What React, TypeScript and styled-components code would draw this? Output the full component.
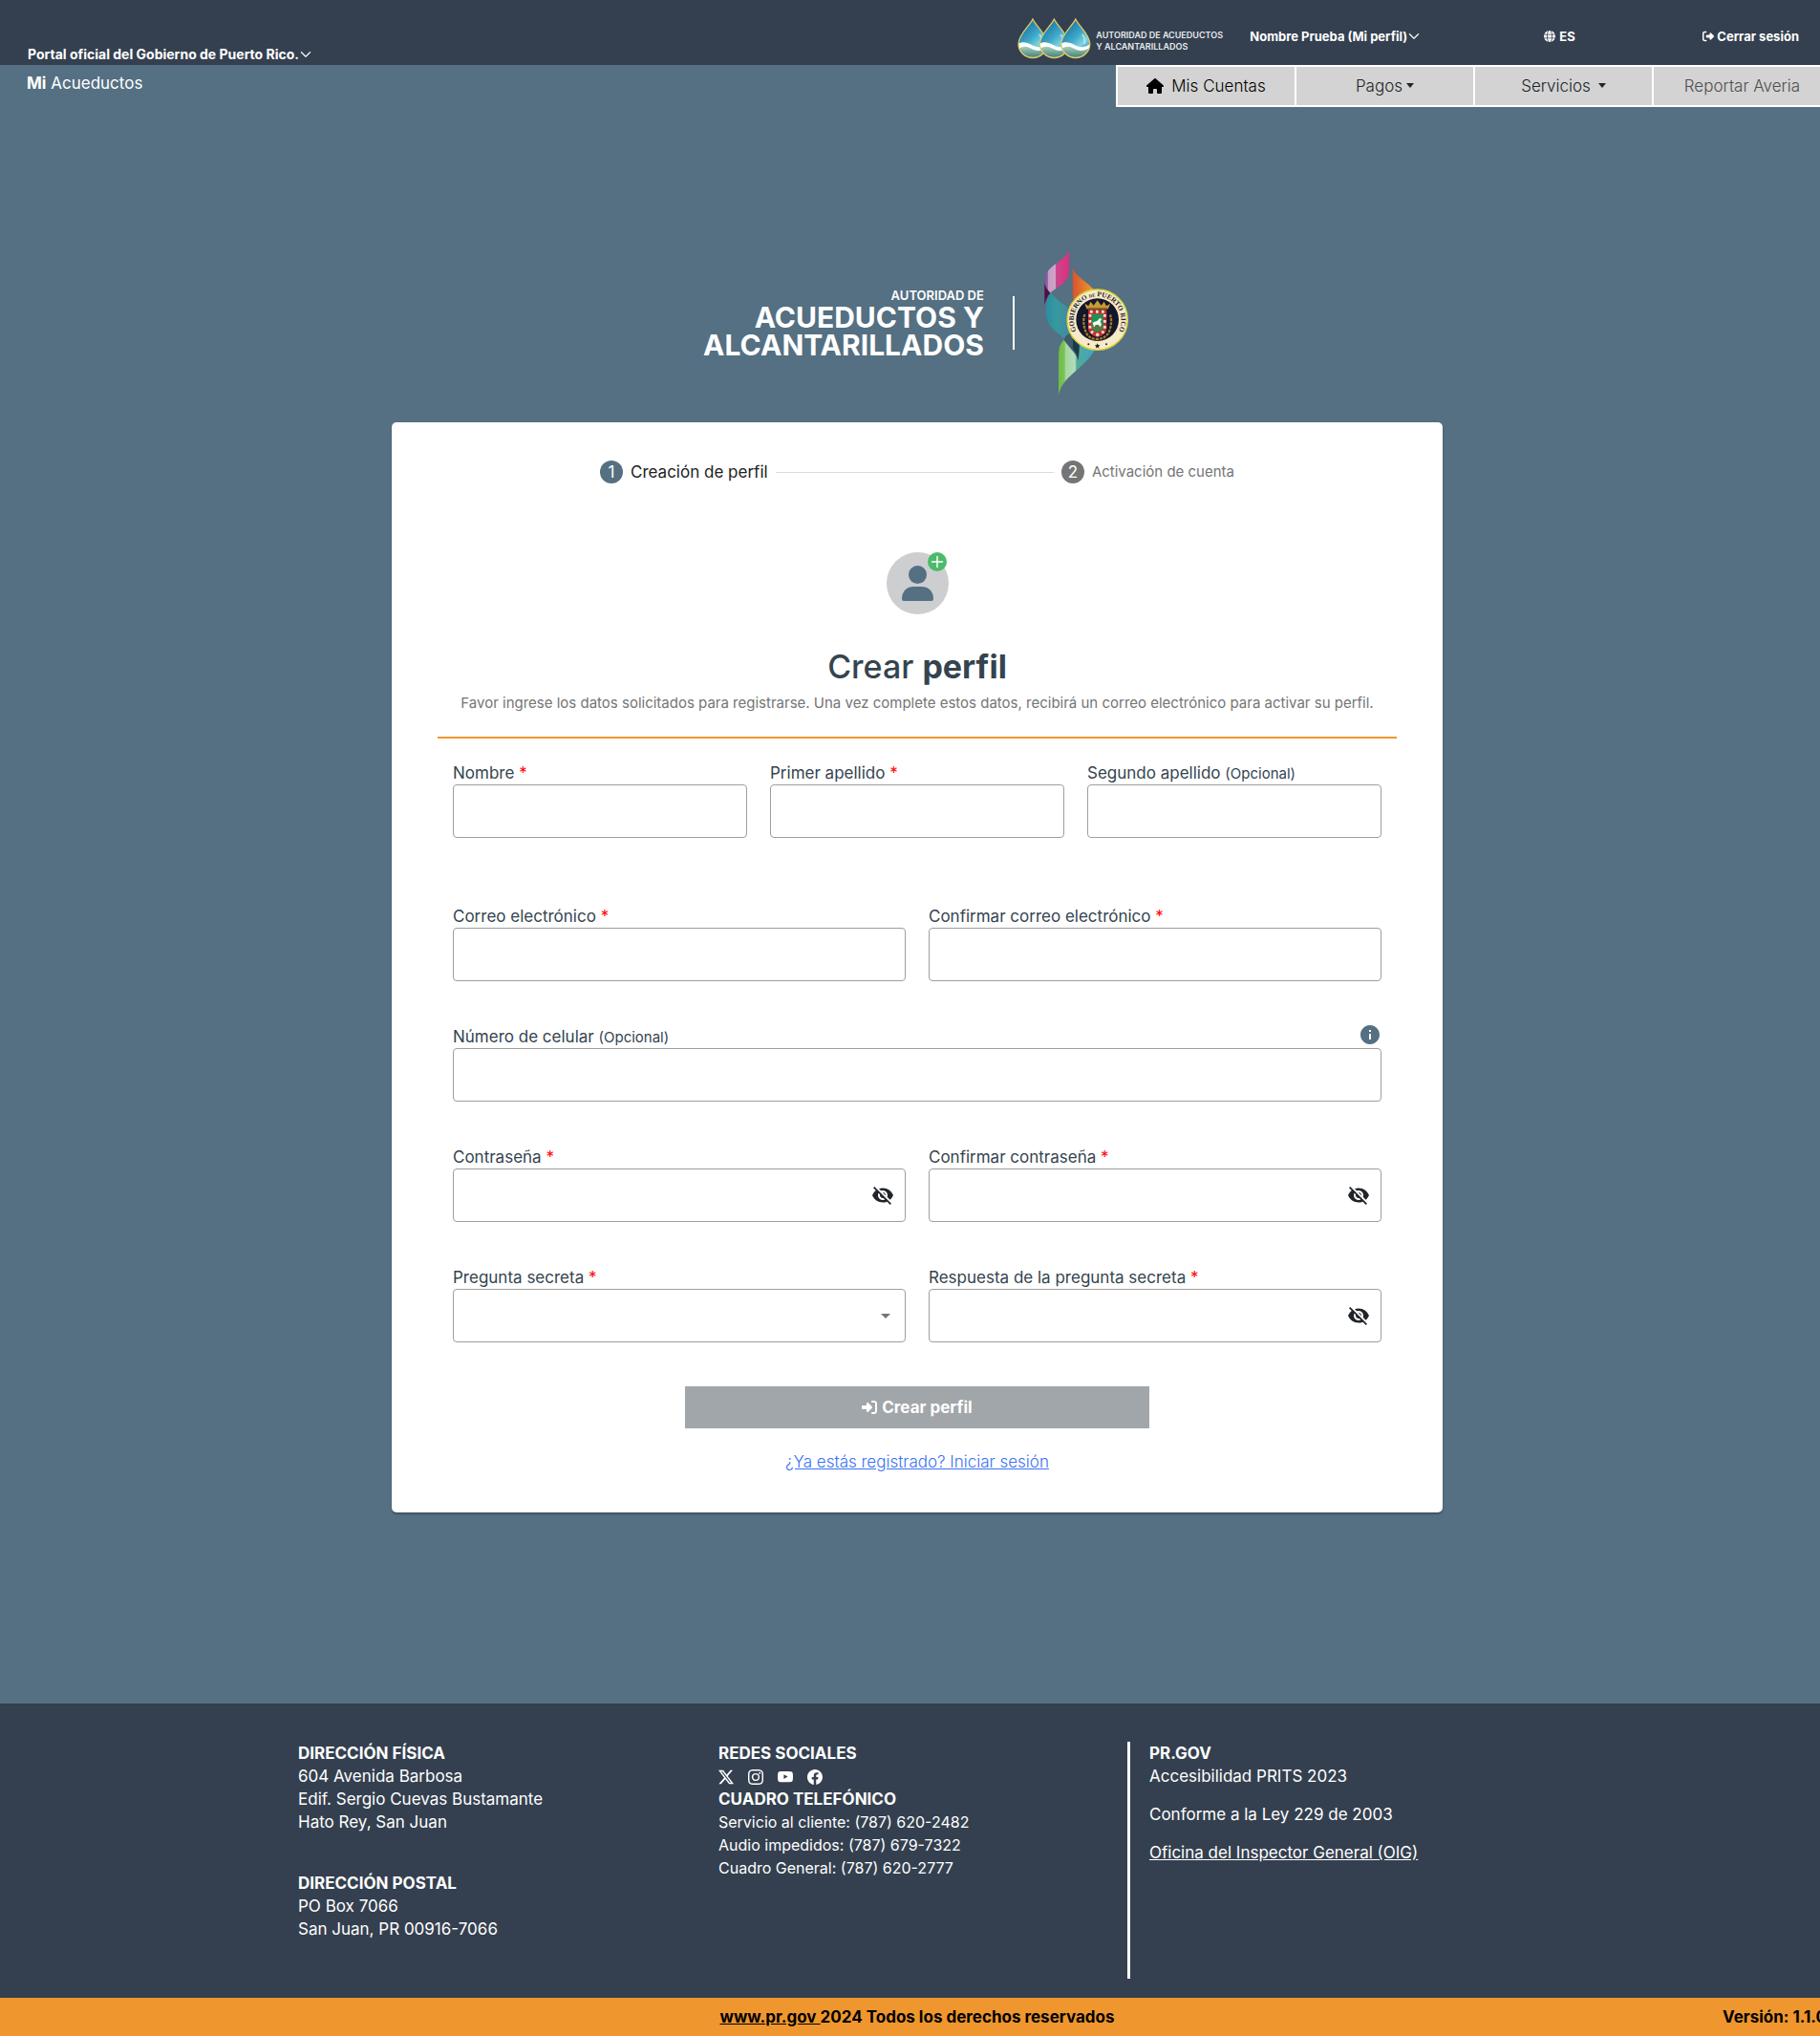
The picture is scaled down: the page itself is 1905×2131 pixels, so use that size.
import React, { useId } from "react";
import styled, { createGlobalStyle } from "styled-components";
import { BsChevronDown, BsFacebook, BsInstagram, BsTwitterX, BsYoutube } from "react-icons/bs";
import { FaGlobe, FaHouse, FaRightFromBracket, FaRightToBracket } from "react-icons/fa6";
import { MdVisibilityOff, MdInfo } from "react-icons/md";

const color = {
  navy: "#34404f",
  slate: "#547082",
  orange: "#ef972e",
  ink: "#34444f",
  muted: "#757575",
  line: "#9e9e9e",
  tab: "#d3d3d3",
};

const GlobalStyle = createGlobalStyle`
  *, *::before, *::after { box-sizing: border-box; }
  body {
    margin: 0;
    overflow-x: hidden;
    background: ${color.slate};
    font-family: Inter, "Liberation Sans", sans-serif;
    font-size: 17px;
    line-height: 24px;
  }
  h1, h2, p, ul { margin: 0; padding: 0; }
  button, input, select { font: inherit; }
`;

const Page = styled.div`
  display: flex;
  flex-direction: column;
  min-height: 100vh;
  margin-right: -15px;
`;

const Header = styled.header`
  display: flex;
  justify-content: space-between;
  height: 68px;
  padding: 0 37px 0 29px;
  background: ${color.navy};
  color: #fff;
`;

const TopButton = styled.button<{ $gap?: number }>`
  display: flex;
  align-items: center;
  gap: ${(p) => p.$gap ?? 1}px;
  padding: 0;
  border: 0;
  background: none;
  color: inherit;
  font-size: 13px;
  font-weight: 700;
  line-height: 20px;
  white-space: nowrap;
`;

const HeaderStart = styled.div`
  display: flex;
  align-items: flex-end;
  ${TopButton} { padding-bottom: 1px; font-size: 14px; }
`;

const HeaderEnd = styled.div`
  display: grid;
  grid-template-columns: 243px 308px 166px auto;
  align-items: center;
  padding-top: 8px;
`;

const Brand = styled.a`
  display: flex;
  align-items: center;
  gap: 4px;
  padding-top: 4px;
  color: #e8ebee;
  font-size: 9px;
  font-weight: 600;
  line-height: 12px;
  text-decoration: none;
  span { padding-top: 6px; }
`;

const Bar = styled.div`
  display: flex;
  justify-content: space-between;
  align-items: flex-start;
  height: 44px;
  color: #fff;
`;

const SiteName = styled.p`
  padding: 7px 0 0 28px;
`;

const Tabs = styled.nav`
  display: grid;
  grid-template-columns: repeat(4, 185px);
  gap: 2px;
  padding: 2px;
  margin-right: 2px;
  background: #fff;
`;

const Tab = styled.a<{ $tone: string; $gap?: number }>`
  display: flex;
  justify-content: center;
  align-items: center;
  gap: ${(p) => p.$gap ?? 8}px;
  height: 40px;
  padding-bottom: 1px;
  background: ${color.tab};
  color: ${(p) => p.$tone};
  font-weight: 300;
  text-decoration: none;
`;

const Caret = styled.span`
  border: 4px solid transparent;
  border-top: 5px solid currentColor;
  border-bottom: 0;
`;

const Main = styled.main`
  display: flex;
  flex-direction: column;
  align-items: center;
  flex: 1;
  padding: 145px 24px 200px;
`;

const Banner = styled.div`
  display: flex;
  align-items: center;
  gap: 30px;
  margin-bottom: 24px;
  color: #fff;
`;

const BannerName = styled.div`
  text-align: right;
  font-size: 30px;
  font-weight: 700;
  line-height: 29px;
`;

const BannerOver = styled.div`
  font-size: 13px;
  font-weight: 600;
  line-height: 18px;
`;

const BannerRule = styled.span`
  width: 2px;
  height: 56px;
  background: #fff;
`;

const Card = styled.section`
  width: 100%;
  max-width: 1100px;
  padding: 40px 48px 41px;
  border-radius: 5px;
  background: #fff;
  box-shadow: 0 2px 2px rgba(0, 0, 0, 0.25);
`;

const Steps = styled.ol`
  display: flex;
  align-items: center;
  gap: 8px;
  max-width: 664px;
  margin: 0 auto;
  padding: 0;
  list-style: none;
`;

const Step = styled.li<{ $active?: boolean }>`
  display: flex;
  align-items: center;
  gap: 8px;
  color: ${(p) => (p.$active ? "#212121" : color.muted)};
  font-size: ${(p) => (p.$active ? 17 : 15)}px;
  white-space: nowrap;
`;

const StepNumber = styled.span<{ $active?: boolean }>`
  width: 24px;
  height: 24px;
  border-radius: 50%;
  background: ${(p) => (p.$active ? color.slate : color.muted)};
  color: #fff;
  font-size: 17px;
  text-align: center;
`;

const StepLine = styled.li`
  flex: 1;
  height: 1px;
  background: #dcdcdc;
`;

const Intro = styled.div`
  display: flex;
  flex-direction: column;
  align-items: center;
  padding: 72px 0 23px;
  border-bottom: 2px solid ${color.orange};
  color: ${color.muted};
  font-size: 15px;
`;

const Title = styled.h1`
  margin: 34px 0 6px;
  color: ${color.ink};
  font-size: 34px;
  font-weight: 500;
  line-height: 41px;
  b { font-weight: 700; }
`;

const Form = styled.form`
  display: flex;
  flex-direction: column;
  gap: 46px;
  padding: 24px 16px 0;
`;

const Row = styled.div<{ $cols: number; $extra?: boolean }>`
  display: grid;
  grid-template-columns: repeat(${(p) => p.$cols}, minmax(0, 1fr));
  gap: 24px;
  margin-bottom: ${(p) => (p.$extra ? 24 : 0)}px;
`;

const FieldHead = styled.div`
  display: flex;
  justify-content: space-between;
  align-items: center;
  height: 24px;
`;

const Label = styled.label`
  color: ${color.ink};
  small { font-size: 15px; }
  span { color: #f00; }
`;

const IconButton = styled.button<{ $color: string }>`
  display: flex;
  align-items: center;
  padding: 0;
  border: 0;
  background: none;
  color: ${(p) => p.$color};
`;

const InfoSlot = styled.div`
  padding-bottom: 4px;
`;

const Control = styled.div`
  display: flex;
  align-items: center;
  height: 56px;
  padding-right: 11px;
  border: 1px solid ${color.line};
  border-radius: 4px;
  color: ${color.muted};
`;

const fieldReset = `
  flex: 1;
  min-width: 0;
  height: 100%;
  padding: 0 16px;
  border: 0;
  outline: 0;
  background: transparent;
  appearance: none;
`;

const Input = styled.input`${fieldReset}`;
const Select = styled.select`${fieldReset}`;

const SelectCaret = styled.span`
  margin-right: 4px;
  border: 5px solid transparent;
  border-top-color: currentColor;
  border-bottom: 0;
`;

const Actions = styled.div`
  display: flex;
  flex-direction: column;
  align-items: center;
  gap: 23px;
`;

const Submit = styled.button`
  display: flex;
  justify-content: center;
  align-items: center;
  gap: 5px;
  width: 50%;
  height: 44px;
  border: 0;
  background: #a1a6aa;
  color: #fff;
  font-weight: 700;
`;

const LoginLink = styled.a`
  color: #3b71f3;
  font-weight: 300;
`;

const Footer = styled.footer`
  background: ${color.navy};
  color: #fff;
`;

const FooterGrid = styled.div`
  display: grid;
  grid-template-columns: 440px 428px 1fr;
  width: 1296px;
  max-width: 100%;
  margin: 0 auto;
  padding: 40px 0 20px;
  min-height: 308px;
`;

const FooterCol = styled.div<{ $ruled?: boolean }>`
  ${(p) => p.$ruled && "padding-left: 20px; border-left: 3px solid #fff;"}
  p + p { margin-top: ${(p) => (p.$ruled ? 16 : 0)}px; }
  a { color: inherit; }
`;

const FooterTitle = styled.h2<{ $spaced?: boolean }>`
  margin-top: ${(p) => (p.$spaced ? 40 : 0)}px;
  font-size: 17px;
  font-weight: 700;
`;

const Phone = styled.p`
  font-size: 16px;
`;

const Social = styled.div`
  display: flex;
  align-items: center;
  gap: 15px;
  height: 24px;
  padding-top: 2px;
  a { display: flex; }
`;

const Legal = styled.div`
  display: grid;
  grid-template-columns: 1fr auto 1fr;
  align-items: center;
  height: 40px;
  padding-bottom: 1px;
  background: ${color.orange};
  color: #000;
  font-weight: 700;
  a { color: inherit; }
`;

const Version = styled.span`
  padding-right: 8px;
  text-align: right;
`;

const Drops = () => (
  <svg width="78" height="43" viewBox="0 0 78 43" aria-hidden="true">
    <defs>
      <linearGradient id="water" x1="0" y1="0" x2="0.7" y2="1">
        <stop offset="0" stopColor="#1c6f9f" />
        <stop offset="0.3" stopColor="#2484ae" />
        <stop offset="0.55" stopColor="#3fa9c9" />
        <stop offset="0.75" stopColor="#7fd3e2" />
        <stop offset="1" stopColor="#2c86a8" />
      </linearGradient>
      <linearGradient id="moss" x1="0" y1="0" x2="0" y2="1">
        <stop offset="0" stopColor="#a9cfc0" />
        <stop offset="1" stopColor="#2f7566" />
      </linearGradient>
      <clipPath id="drop">
        <path d="M16 2C19 8 31 17 31 27A15 14 0 0 1 1 27C1 17 13 8 16 2Z" />
      </clipPath>
    </defs>
    {[0, 22.4, 44.8].map((x) => (
      <g key={x} transform={`translate(${x} 0)`}>
        <g clipPath="url(#drop)">
          <rect width="32" height="43" fill="url(#water)" />
          <path d="M0 27C8 23 12 27 17 29S27 31 32 26V43H0Z" fill="#fff" />
          <path d="M0 33C8 27 12 31 17 33S27 34 32 30V43H0Z" fill="url(#moss)" />
          <path d="M23 17Q27 22 25 27" stroke="#c4f0f5" strokeWidth="2" fill="none" opacity="0.7" />
        </g>
        <path
          d="M16 1C19 8 31 17 31 27A15 14.500 0 0 1 1 27C1 17 13 8 16 1Z"
          fill="none"
          stroke="#e3c96c"
          strokeWidth="1.300"
        />
      </g>
    ))}
  </svg>
);

const Emblem = () => (
  <svg width="92" height="161" viewBox="54 8 276 483" role="img" aria-label="Gobierno de Puerto Rico">
    <defs>
      <linearGradient id="pink" gradientUnits="userSpaceOnUse" x1="58" x2="135" y1="0" y2="0">
        <stop offset="0" stopColor="#7a4d96" />
        <stop offset="0.15" stopColor="#9a6bae" />
        <stop offset="0.16" stopColor="#c79cc4" />
        <stop offset="0.44" stopColor="#cda3c6" />
        <stop offset="0.46" stopColor="#c9488f" />
        <stop offset="1" stopColor="#dc2f7c" />
      </linearGradient>
      <linearGradient id="amber" gradientUnits="userSpaceOnUse" x1="147" x2="215" y1="0" y2="0">
        <stop offset="0" stopColor="#d9532d" />
        <stop offset="1" stopColor="#eaa22f" />
      </linearGradient>
      <linearGradient id="teal" gradientUnits="userSpaceOnUse" x1="62" x2="140" y1="0" y2="0">
        <stop offset="0" stopColor="#2d8aa6" />
        <stop offset="0.4" stopColor="#369a9c" />
        <stop offset="1" stopColor="#4188a6" />
      </linearGradient>
      <linearGradient id="leaf" gradientUnits="userSpaceOnUse" x1="102" x2="215" y1="0" y2="0">
        <stop offset="0" stopColor="#6dbb45" />
        <stop offset="0.17" stopColor="#7cc35a" />
        <stop offset="0.18" stopColor="#a5d69b" />
        <stop offset="0.46" stopColor="#b3dbc0" />
        <stop offset="0.5" stopColor="#4fae92" />
        <stop offset="1" stopColor="#43a0cc" />
      </linearGradient>
    </defs>
    <path d="M135 20C128 58 60 68 58 118V195C64 170 72 160 84 150C112 130 134 124 135 82Z" fill="url(#pink)" />
    <path d="M58 125C62 145 72 150 76 157C66 168 62 180 58 195Z" fill="#4b1145" />
    <path d="M146 76C154 108 196 120 216 152L175 172L147 178Z" fill="url(#amber)" />
    <path d="M78 156C62 178 61 200 63 228C68 270 106 282 119 302C130 290 140 280 150 275L130 202C112 188 90 174 78 156Z" fill="url(#teal)" />
    <path d="M119 304C100 322 103 342 102 364V480C110 420 182 396 216 335L170 320L164 368C156 344 132 326 119 304Z" fill="url(#leaf)" />
    <path d="M119 302C124 290 135 284 142 282L168 322L164 368C158 342 132 326 119 302Z" fill="#3d5b69" />
    <path d="M147 300L166 318L164 368C162 350 154 340 147 332Z" fill="#173c4c" />
    <circle cx="224" cy="241" r="95" fill="#f8e9c7" stroke="#d9d32d" strokeWidth="4" />
    <circle cx="224" cy="241" r="67" fill="#14162c" />
    <path id="seal-ring" d="M171 294.500A74.500 74.500 0 1 1 277 294.500" fill="none" />
    <text fill="#20202a" fontFamily="'Liberation Serif', serif" fontWeight="700" fontSize="22">
      <textPath href="#seal-ring" startOffset="50%" textAnchor="middle">
        GOBIERNO <tspan fontSize="14">DE</tspan> PUERTO RICO
      </textPath>
    </text>
    <path d="M224 315l2.500 6h6l-5 4 2 6-5.500-4-5.500 4 2-6-5-4h6Z" fill="#111" />
    <circle cx="196" cy="318" r="3" fill="#222" />
    <circle cx="252" cy="318" r="3" fill="#222" />
    <path d="M184 224Q176 250 188 280Q196 300 222 302Q250 300 260 280Q272 250 264 224" fill="none" stroke="#a3792c" strokeWidth="7" strokeDasharray="9 3" />
    <path d="M190 207L184 190L196 198L203 184L212 196L224 180L236 196L245 184L252 198L264 190L258 207Z" fill="#c99a35" />
    <rect x="193" y="203" width="62" height="5" fill="#8f6a22" />
    <path d="M195 210H253V270Q253 288 224 296Q195 288 195 270Z" fill="#c5302e" />
    <path d="M201 216H247V268Q247 281 224 288Q201 281 201 268Z" fill="none" stroke="#f1dfcf" strokeWidth="9" strokeDasharray="8 10" />
    <path d="M206 223H242V266Q242 274 224 280Q206 274 206 266Z" fill="#1f9150" />
    <path d="M209 252C214 244 222 248 226 241L232 235L238 240L233 246L237 256L232 264L228 257H218L214 265L211 258Z" fill="#f4f6f2" />
    <path d="M208 266H240" stroke="#c7463a" strokeWidth="4" />
  </svg>
);

const Avatar = () => (
  <svg width="65" height="65" viewBox="0 0 65 65" aria-hidden="true">
    <circle cx="32.500" cy="32.500" r="32.500" fill="#cdced0" />
    <circle cx="32.500" cy="23.500" r="9.500" fill={color.slate} />
    <path d="M16 49C16 40 22 36 28 36H37C43 36 49 40 49 49Q49 51 47 51H18Q16 51 16 49Z" fill={color.slate} />
    <circle cx="53" cy="10" r="10" fill="#4cba6c" />
    <path d="M53 4.500V15.500M47.500 10H58.500" stroke="#fff" strokeWidth="1.500" strokeLinecap="round" />
  </svg>
);

type FieldProps = {
  label: string;
  required?: boolean;
  kind?: "text" | "email" | "tel" | "password" | "select";
  info?: boolean;
};

const Field = ({ label, required, kind = "text", info }: FieldProps) => {
  const id = useId();
  return (
    <div>
      <FieldHead>
        <Label htmlFor={id}>
          {label} {required ? <span>*</span> : <small>(Opcional)</small>}
        </Label>
        {info && (
          <InfoSlot>
            <IconButton type="button" $color={color.slate} aria-label="Información">
              <MdInfo size={24} />
            </IconButton>
          </InfoSlot>
        )}
      </FieldHead>
      <Control>
        {kind === "select" ? (
          <>
            <Select id={id} defaultValue="">
              <option value="" />
            </Select>
            <SelectCaret />
          </>
        ) : (
          <Input id={id} type={kind} />
        )}
        {kind === "password" && (
          <IconButton type="button" $color="#212529" aria-label="Mostrar">
            <MdVisibilityOff size={24} />
          </IconButton>
        )}
      </Control>
    </div>
  );
};

const socials = [
  { name: "X", Icon: BsTwitterX },
  { name: "Instagram", Icon: BsInstagram },
  { name: "YouTube", Icon: BsYoutube },
  { name: "Facebook", Icon: BsFacebook },
];

export default function App() {
  return (
    <Page>
      <GlobalStyle />
      <Header>
        <HeaderStart>
          <TopButton type="button">
            Portal oficial del Gobierno de Puerto Rico.
            <BsChevronDown size={12} strokeWidth={1} />
          </TopButton>
        </HeaderStart>
        <HeaderEnd>
          <Brand href="#">
            <Drops />
            <span>
              AUTORIDAD DE ACUEDUCTOS
              <br />Y ALCANTARILLADOS
            </span>
          </Brand>
          <TopButton type="button">
            Nombre Prueba (Mi perfil)
            <BsChevronDown size={12} strokeWidth={1} />
          </TopButton>
          <TopButton type="button" $gap={4}>
            <FaGlobe size={12} />
            ES
          </TopButton>
          <TopButton type="button" $gap={3}>
            <FaRightFromBracket size={12} />
            Cerrar sesión
          </TopButton>
        </HeaderEnd>
      </Header>
      <Bar>
        <SiteName>
          <b>Mi</b> Acueductos
        </SiteName>
        <Tabs>
          <Tab href="#" $tone="#000">
            <FaHouse size={18} />
            Mis Cuentas
          </Tab>
          <Tab href="#" $tone="#212529" $gap={4}>
            Pagos
            <Caret />
          </Tab>
          <Tab href="#" $tone="#212529">
            Servicios
            <Caret />
          </Tab>
          <Tab href="#" $tone="#4f4f4f">
            Reportar Averia
          </Tab>
        </Tabs>
      </Bar>
      <Main>
        <Banner>
          <BannerName>
            <BannerOver>AUTORIDAD DE</BannerOver>
            ACUEDUCTOS Y<br />
            ALCANTARILLADOS
          </BannerName>
          <BannerRule />
          <Emblem />
        </Banner>
        <Card>
          <Steps>
            <Step $active>
              <StepNumber $active>1</StepNumber>
              Creación de perfil
            </Step>
            <StepLine />
            <Step>
              <StepNumber>2</StepNumber>
              Activación de cuenta
            </Step>
          </Steps>
          <Intro>
            <Avatar />
            <Title>
              Crear <b>perfil</b>
            </Title>
            <p>
              Favor ingrese los datos solicitados para registrarse. Una vez complete estos datos, recibirá un correo
              electrónico para activar su perfil.
            </p>
          </Intro>
          <Form>
            <Row $cols={3} $extra>
              <Field label="Nombre" required />
              <Field label="Primer apellido" required />
              <Field label="Segundo apellido" />
            </Row>
            <Row $cols={2}>
              <Field label="Correo electrónico" required kind="email" />
              <Field label="Confirmar correo electrónico" required kind="email" />
            </Row>
            <Row $cols={1}>
              <Field label="Número de celular" kind="tel" info />
            </Row>
            <Row $cols={2}>
              <Field label="Contraseña" required kind="password" />
              <Field label="Confirmar contraseña" required kind="password" />
            </Row>
            <Row $cols={2}>
              <Field label="Pregunta secreta" required kind="select" />
              <Field label="Respuesta de la pregunta secreta" required kind="password" />
            </Row>
            <Actions>
              <Submit type="button">
                <FaRightToBracket size={16} />
                Crear perfil
              </Submit>
              <LoginLink href="#">¿Ya estás registrado? Iniciar sesión</LoginLink>
            </Actions>
          </Form>
        </Card>
      </Main>
      <Footer>
        <FooterGrid>
          <FooterCol>
            <FooterTitle>DIRECCIÓN FÍSICA</FooterTitle>
            <p>604 Avenida Barbosa</p>
            <p>Edif. Sergio Cuevas Bustamante</p>
            <p>Hato Rey, San Juan</p>
            <FooterTitle $spaced>DIRECCIÓN POSTAL</FooterTitle>
            <p>PO Box 7066</p>
            <p>San Juan, PR 00916-7066</p>
          </FooterCol>
          <FooterCol>
            <FooterTitle>REDES SOCIALES</FooterTitle>
            <Social>
              {socials.map(({ name, Icon }) => (
                <a key={name} href="#" aria-label={name}>
                  <Icon size={16} />
                </a>
              ))}
            </Social>
            <FooterTitle>CUADRO TELEFÓNICO</FooterTitle>
            <Phone>Servicio al cliente: (787) 620-2482</Phone>
            <Phone>Audio impedidos: (787) 679-7322</Phone>
            <Phone>Cuadro General: (787) 620-2777</Phone>
          </FooterCol>
          <FooterCol $ruled>
            <FooterTitle>PR.GOV</FooterTitle>
            <p>Accesibilidad PRITS 2023</p>
            <p>Conforme a la Ley 229 de 2003</p>
            <p>
              <a href="#">Oficina del Inspector General (OIG)</a>
            </p>
          </FooterCol>
        </FooterGrid>
        <Legal>
          <span />
          <span>
            <a href="#">www.pr.gov </a>2024 Todos los derechos reservados
          </span>
          <Version>Versión: 1.1.0</Version>
        </Legal>
      </Footer>
    </Page>
  );
}
